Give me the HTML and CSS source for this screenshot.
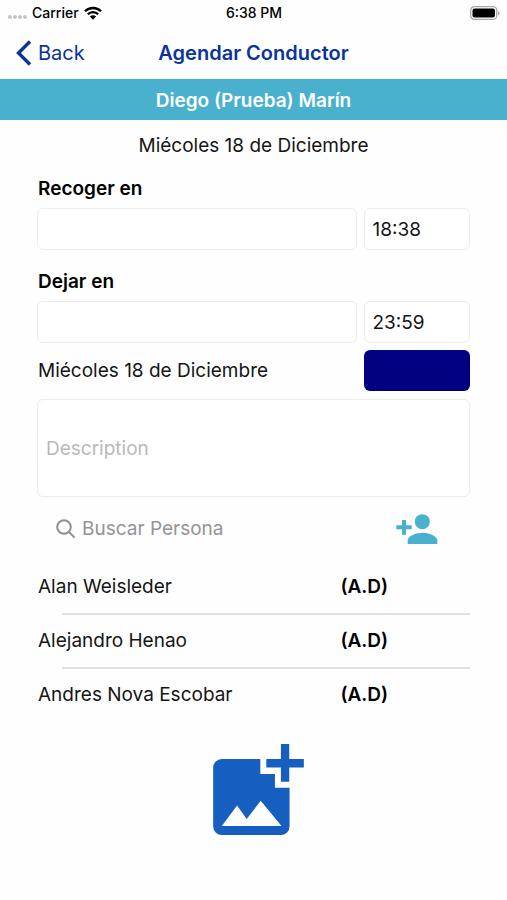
FILE: index.html
```html
<!DOCTYPE html>
<html lang="es">
<head>
    <meta charset="UTF-8">
    <meta name="viewport" content="width=device-width, initial-scale=1.0">
    <title>Agendar Conductor</title>
    <link rel="stylesheet" href="styles.css">
</head>
<body>
    <div class="status-bar">
        <div class="carrier">
            <span class="signal"><i></i><i></i><i></i><i></i></span>
            <span>Carrier</span>
            <svg class="wifi" viewBox="0 0 18 14" aria-hidden="true">
                <path d="M1 5.3a11.3 11.3 0 0 1 16 0M3.8 8.3a7.3 7.3 0 0 1 10.4 0" fill="none" stroke="#000" stroke-width="2.3"/>
                <path d="M9 13.8 5.9 10.6a4.4 4.4 0 0 1 6.2 0z"/>
            </svg>
        </div>
        <div class="clock">6:38 PM</div>
        <div class="battery-side">
            <svg class="battery" viewBox="0 0 30 14" aria-hidden="true">
                <rect x="0.7" y="0.7" width="26" height="12.6" rx="3.6" fill="#fff" stroke="#a8a8a8" stroke-width="1.3"/>
                <rect x="2.5" y="2.5" width="22.4" height="9" rx="2"/>
                <path d="M28 5v4.4q1.6-.8 1.6-2.2T28 5z" fill="#a8a8a8"/>
            </svg>
        </div>
    </div>

    <header class="navbar">
        <a href="#" class="back">
            <svg viewBox="0 0 16 26" aria-hidden="true"><path d="M14 1.5 2.5 13 14 24.5" fill="none" stroke="#0b349b" stroke-width="3.4"/></svg>
            <span>Back</span>
        </a>
        <h1>Agendar Conductor</h1>
    </header>

    <div class="banner">Diego (Prueba) Marín</div>

    <main class="container">
        <p class="date">Miécoles 18 de Diciembre</p>

        <label class="field-label" for="pickup">Recoger en</label>
        <div class="field-row">
            <input type="text" id="pickup" class="field">
            <input type="text" class="field" value="18:38" aria-label="Hora de recogida">
        </div>

        <label class="field-label" for="dropoff">Dejar en</label>
        <div class="field-row">
            <input type="text" id="dropoff" class="field">
            <input type="text" class="field" value="23:59" aria-label="Hora de llegada">
        </div>

        <div class="field-row day-row">
            <span>Miécoles 18 de Diciembre</span>
            <button type="button" class="day-btn" aria-label="Cambiar fecha"></button>
        </div>

        <input type="text" class="field description" placeholder="Description" aria-label="Description">

        <div class="search-row">
            <svg class="search-icon" viewBox="0 0 20 20" aria-hidden="true"><circle cx="8" cy="8" r="6.8"/><path d="m13 13 5.6 5.6"/></svg>
            <input type="search" class="search" placeholder="Buscar Persona" aria-label="Buscar Persona">
            <button type="button" class="icon-btn" aria-label="Agregar persona">
                <svg class="add-person" viewBox="228 99 124 90" aria-hidden="true">
                    <circle cx="306" cy="122" r="22.5"/>
                    <path d="M262 189v-10c0-15 25-24 44.500-24s44.500 9 44.500 24v10z"/>
                    <path d="M245 117h12v16h17v12h-17v16h-12v-16h-17v-12h17z"/>
                </svg>
            </button>
        </div>

        <ul class="people">
            <li><span>Alan Weisleder</span><b>(A.D)</b></li>
            <li><span>Alejandro Henao</span><b>(A.D)</b></li>
            <li><span>Andres Nova Escobar</span><b>(A.D)</b></li>
        </ul>

        <button type="button" class="icon-btn photo-btn" aria-label="Agregar foto">
            <svg class="add-photo" viewBox="68 70 273 274" aria-hidden="true">
                <path fill-rule="evenodd" d="M94 115h116v45h44v42h44v116a26 26 0 0 1-26 26H94a26 26 0 0 1-26-26V141a26 26 0 0 1 26-26zM94 317h180l-63-76-42 55-29-41z"/>
                <path d="M272 70h25v45h44v26h-44v43h-25v-43h-44v-26h44z"/>
            </svg>
        </button>
    </main>
</body>
</html>
```
FILE: styles.css
```css
* { margin: 0; padding: 0; box-sizing: border-box; }
body { font-family: "Inter", sans-serif; font-size: 19px; line-height: 24px; background: #fefefe; color: #151515; }
input, button { font: inherit; color: inherit; }
svg { display: block; }

/* Status bar */
.status-bar { display: grid; grid-template-columns: 1fr auto 1fr; align-items: center; height: 26px; padding: 0 7px 0 8px; font-size: 14px; font-weight: 500; color: #000; }
.carrier { display: flex; align-items: center; gap: 5px; }
.signal { display: flex; gap: 1px; padding-top: 8px; }
.signal i { width: 4px; height: 4px; border-radius: 50%; background: #c4c4c4; }
.wifi { width: 18px; height: 14px; }
.battery-side { display: flex; justify-content: flex-end; }
.battery { width: 30px; height: 14px; }

/* Navigation */
.navbar { display: grid; grid-template-columns: 1fr auto 1fr; align-items: center; height: 53px; padding: 0 16px; color: #0b349b; }
.back { display: flex; align-items: center; gap: 6px; color: #0b349b; text-decoration: none; font-size: 20px; }
.back svg { width: 16px; height: 26px; }
.navbar h1 { font-size: 20px; font-weight: 600; }
.banner { padding: 10px 16px 7px; background: #49b1ce; color: #fff; font-weight: 600; text-align: center; }

/* Form */
.container { padding: 14px 37px 0; }
.date { margin-bottom: 19px; text-align: center; }
.field-label { display: block; margin-bottom: 7px; padding-left: 1px; font-weight: 600; color: #000; }
.field-row { display: grid; grid-template-columns: 3fr 1fr; gap: 7px; margin-bottom: 20px; }
.field { width: 100%; min-width: 0; height: 42px; padding: 0 8px; border: 1px solid #ececec; border-radius: 6px; background: #fff; outline: none; }
.day-row { align-items: center; margin: -13px 0 8px; }
.day-row span { padding-left: 1px; }
.day-btn { height: 41px; border: none; border-radius: 6px; background: #000080; cursor: pointer; }
.description { height: 98px; }
.description::placeholder { color: #b9b9b9; opacity: 1; }

/* Search */
.search-row { display: flex; align-items: center; height: 63px; padding: 0 32px 0 19px; }
.search-icon { width: 20px; height: 20px; fill: none; stroke: #8e8e93; stroke-width: 2; }
.search { flex: 1; min-width: 0; height: 40px; padding-left: 6px; border: none; background: none; outline: none; }
.search::placeholder { color: #939398; opacity: 1; }
.icon-btn { border: none; background: none; cursor: pointer; }
.add-person { width: 42px; height: 30px; fill: #49b1ce; }

/* People list */
.people { list-style: none; }
.people li { position: relative; display: grid; grid-template-columns: 7fr 3fr; align-items: center; height: 54px; padding-left: 1px; }
.people li + li::before { content: ""; position: absolute; top: -1px; left: 25px; right: 0; height: 2px; background: #e0e0e2; }
.people b { font-weight: 600; color: #000; }

.photo-btn { display: block; margin: 22px auto 0; padding-left: 9px; }
.add-photo { width: 91px; height: 91px; fill: #165fc0; }
```
